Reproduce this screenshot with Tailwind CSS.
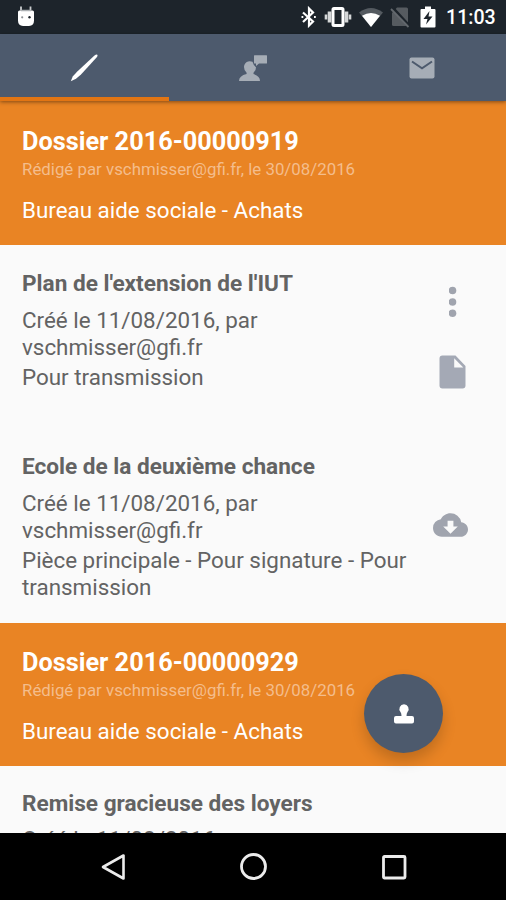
<!DOCTYPE html>
<html lang="fr">

<head>
    <meta charset="UTF-8">
    <meta name="viewport" content="width=device-width, initial-scale=1.0">
    <title>Dossiers</title>
    <script src="https://cdn.jsdelivr.net/npm/@tailwindcss/browser@4"></script>
</head>

<body class="bg-[#fafafa] font-['Roboto',sans-serif]">

<div class="relative flex flex-col w-[506px] h-[900px] overflow-hidden">

    <!-- Status bar -->
    <header class="flex items-center justify-between h-[34px] shrink-0 bg-[#1d242b] pl-[17px] pr-[12px] text-white">
        <svg class="w-[18px] h-[22px]" viewBox="0 0 18 22" fill="#fff">
            <path d="M4 .5v4M13.500.5v4" stroke="#c9ccce" stroke-width="1.800"/>
            <path d="M1 6q0-1.500 1.500-1.500h13q1.500 0 1.500 1.500v8.500q0 5-5 5.500h-6q-5-.5-5-5.500z"/>
            <path d="M4 4.500h10" stroke="#aeb2b5" stroke-width="1.500"/>
            <circle cx="5.200" cy="11.300" r="1.100" fill="#8b8f93"/>
            <circle cx="12.500" cy="11.300" r="1.200" fill="#1d242b"/>
        </svg>
        <div class="flex items-center">
            <!-- Bluetooth -->
            <svg class="w-[16px] h-[22px]" viewBox="0 0 16 22" fill="none" stroke="#fff" stroke-width="2.200">
                <path d="M2 6.500l10 9L8 19.500V2.500l4 4-10 9.500"/>
                <path d="M.5 11h1.800M13 11h1.800" stroke-width="1.800"/>
            </svg>
            <!-- Vibrate -->
            <svg class="w-[28px] h-[22px] ml-[7px]" viewBox="0 0 28 22" fill="none">
                <path d="M2 8.500v5M26 8.500v5" stroke="#d5d7d8" stroke-width="2.600"/>
                <path d="M5.500 5.500v11M22.500 5.500v11" stroke="#d5d7d8" stroke-width="3.600"/>
                <rect x="9" y="2.500" width="10" height="17" rx="1" stroke="#fff" stroke-width="3"/>
            </svg>
            <!-- Wifi -->
            <svg class="w-[26px] h-[22px] ml-[6px]" viewBox="0 0 26 22">
                <path d="M1 6.500Q13-2.500 25 6.500L13 21z" fill="#545a60"/>
                <path d="M4 9.800Q13 4 22 9.800L13 21z" fill="#fff"/>
            </svg>
            <!-- No sim -->
            <svg class="w-[20px] h-[22px] ml-[6px]" viewBox="0 0 20 22">
                <path d="M7 1.500h9.500q1.500 0 1.500 1.500v17H3.500q-1.500 0-1.500-1.500V7z" fill="#565b60"/>
                <path d="M2 1.500L19 20" stroke="#1d242b" stroke-width="3.500"/>
                <path d="M1 3L18.500 21" stroke="#63686d" stroke-width="1.800"/>
            </svg>
            <!-- Battery -->
            <svg class="w-[16px] h-[22px] ml-[10px]" viewBox="0 0 16 22">
                <path d="M5 .5h6V3h3.500q1 0 1 1v16.500q0 1-1 1h-13q-1 0-1-1V4q0-1 1-1H5z" fill="#fff"/>
                <path d="M9.500 5L3.500 13h4L6 18.500l6.500-8H8.500z" fill="#1d242b"/>
            </svg>
            <span class="ml-[10px] mt-[2px] w-[48px] text-[19.600px] leading-[22px] font-medium whitespace-nowrap">11:03</span>
        </div>
    </header>

    <!-- Tabs -->
    <nav class="relative z-10 grid grid-cols-3 h-[67px] shrink-0 bg-[#4d5a6d] shadow-[0_1px_4px_rgba(0,0,0,0.45)]">
        <a href="#" class="flex items-center justify-center border-b-4 border-[#e27513]">
            <svg class="w-[30px] h-[30px] mt-[4px]" viewBox="0 0 30 30" fill="#fff">
                <path d="M28.300 1.800q.7 1-.3 2.200L12 21.500 7 25.800l-5.200 2.400 1.900-4.700L8.300 18.500 25.500 2.500q2-1.500 2.800-.7z"/>
            </svg>
        </a>
        <a href="#" class="flex items-center justify-center">
            <svg class="w-[30px] h-[28px]" viewBox="0 0 30 28" fill="#a6adb6">
                <path d="M16.500 1.200h12q.5 0 .5.500V9q0 .5-.5.500h-7.500l-3 2.500V9.500h-1.500q-.5 0-.5-.5V1.700q0-.5.500-.5z"/>
                <path d="M14.500 7.800A5.800 5.800 0 0 0 6 13q0 3.700 2.600 5.700v1.300Q1 21.800 1 27h21q0-5.200-6.500-7v-1.300q2.500-2 2.500-5.500-2.500-1.500-3.500-5.400z"/>
            </svg>
        </a>
        <a href="#" class="flex items-center justify-center">
            <svg class="w-[26px] h-[22px]" viewBox="0 0 26 22">
                <rect x=".5" y=".5" width="25" height="21" rx="2" fill="#a6adb6"/>
                <path d="M3 4.500l10 6.800 10-6.800" fill="none" stroke="#4d5a6d" stroke-width="2"/>
            </svg>
        </a>
    </nav>

    <!-- Dossier list -->
    <main class="flex-1 min-h-0 overflow-hidden text-[#636363] text-[22.400px] leading-[27px]">

        <section class="h-[144px] bg-[#e98424] px-[22px] pt-[26px] text-white">
            <h2 class="text-[25.300px] leading-[30px] font-bold">Dossier 2016-00000919</h2>
            <p class="text-[16.850px] leading-[20px] mt-[2px] text-[#f4bd8c]">Rédigé par vschmisser@gfi.fr, le 30/08/2016</p>
            <p class="mt-[18px]">Bureau aide sociale - Achats</p>
        </section>

        <article class="flex justify-between h-[183px] pl-[22px] pr-[36px] pt-[25px]">
            <div class="w-[290px]">
                <h3 class="text-[22.600px] font-bold">Plan de l'extension de l'IUT</h3>
                <p class="mt-[10px]">Créé le 11/08/2016, par vschmisser@gfi.fr</p>
                <p class="mt-[3px]">Pour transmission</p>
            </div>
            <div class="flex flex-col items-center w-[35px] pt-[16px]">
                <svg class="w-[8px] h-[32px]" viewBox="0 0 8 32" fill="#a0a4ae">
                    <circle cx="3.500" cy="4.500" r="3.800"/>
                    <circle cx="3.500" cy="16" r="3.800"/>
                    <circle cx="3.500" cy="27.200" r="3.800"/>
                </svg>
                <svg class="w-[27px] h-[34px] mt-[37px]" viewBox="0 0 27 34" fill="#a4a9b5">
                    <path fill-rule="evenodd" d="M3.500.5h13L26.500 11v19.500q0 3-3 3h-20q-3 0-3-3v-27q0-3 3-3zM15.200 3.200v9.300H24.300z"/>
                </svg>
            </div>
        </article>

        <article class="flex justify-between h-[195px] pl-[22px] pr-[38px] pt-[25px]">
            <div class="w-[390px]">
                <h3 class="text-[22.600px] font-bold">Ecole de la deuxième chance</h3>
                <p class="mt-[10px] w-[290px]">Créé le 11/08/2016, par vschmisser@gfi.fr</p>
                <p class="mt-[3px]">Pièce principale - Pour signature - Pour transmission</p>
            </div>
            <svg class="w-[35px] h-[24px] mt-[60px] shrink-0" viewBox="0 0 24 16" fill="#a0a4ae">
                <path d="M19.350 6.040A7.490 7.490 0 0 0 12 0C9.110 0 6.600 1.640 5.350 4.040A5.994 5.994 0 0 0 0 10c0 3.310 2.690 6 6 6h13c2.760 0 5-2.240 5-5 0-2.640-2.050-4.780-4.650-4.960zM17 9l-5 5-5-5h3V5h4v4h3z"/>
            </svg>
        </article>

        <section class="h-[143px] bg-[#e98424] px-[22px] pt-[25px] text-white">
            <h2 class="text-[25.300px] leading-[30px] font-bold">Dossier 2016-00000929</h2>
            <p class="text-[16.850px] leading-[20px] mt-[2px] text-[#f4bd8c]">Rédigé par vschmisser@gfi.fr, le 30/08/2016</p>
            <p class="mt-[18px]">Bureau aide sociale - Achats</p>
        </section>

        <article class="h-[183px] pl-[22px] pt-[24px]">
            <h3 class="text-[22.600px] font-bold">Remise gracieuse des loyers</h3>
            <p class="mt-[9px] w-[290px]">Créé le 11/08/2016, par vschmisser@gfi.fr</p>
        </article>
    </main>

    <!-- Floating action button -->
    <button class="absolute left-[364px] top-[674px] flex items-center justify-center w-[79px] h-[79px] rounded-full bg-[#4d5a6d] shadow-[0_8px_14px_rgba(0,0,0,0.18)]">
        <svg class="w-[20px] h-[20px]" viewBox="0 0 20 20" fill="#fff">
            <path d="M10 .3a4.600 4.600 0 0 1 3.500 7.600q-1 1.500-1 4.100H18q2 0 2 2v3.500q0 2-2 2H2q-2 0-2-2V14q0-2 2-2h5.500q0-2.600-1-4.100A4.600 4.600 0 0 1 10 .3z"/>
        </svg>
    </button>

    <!-- Navigation bar -->
    <footer class="flex items-center justify-between h-[67px] shrink-0 bg-black pl-[100px] pr-[99px]">
        <svg class="w-[27px] h-[28px]" viewBox="0 0 27 28" fill="none" stroke="#ececec" stroke-width="2.600">
            <path d="M23.500 2.500v23L3 14z" stroke-linejoin="round"/>
        </svg>
        <svg class="w-[28px] h-[28px]" viewBox="0 0 28 28" fill="none" stroke="#ececec" stroke-width="2.800">
            <circle cx="13.500" cy="13.500" r="12"/>
        </svg>
        <svg class="w-[26px] h-[26px]" viewBox="0 0 26 26" fill="none" stroke="#ececec" stroke-width="2.800">
            <rect x="2.500" y="2.500" width="21.500" height="21.500" rx="1"/>
        </svg>
    </footer>
</div>

</body>

</html>
